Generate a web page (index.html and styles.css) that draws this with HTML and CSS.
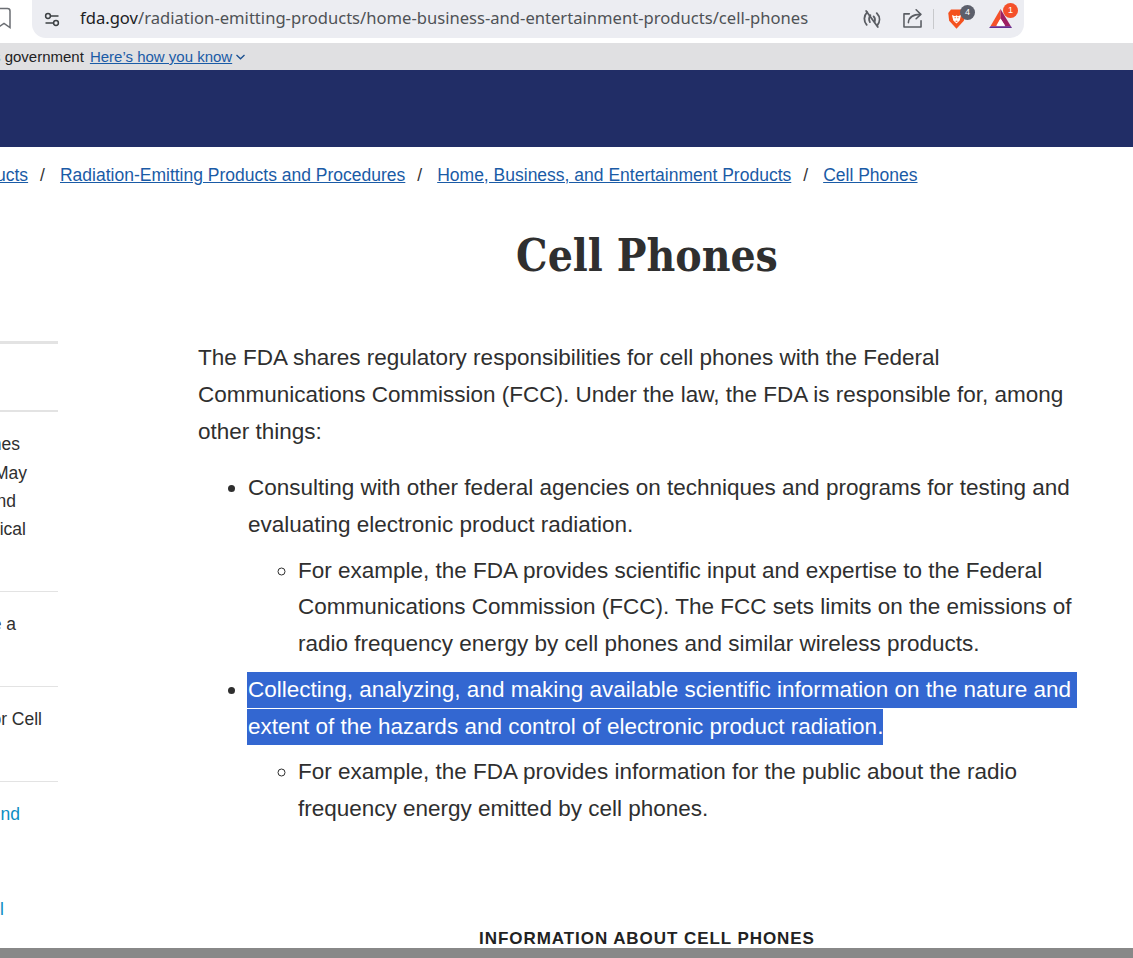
FILE: index.html
```html
<!DOCTYPE html>
<html lang="en">
<head>
    <meta charset="UTF-8">
    <meta name="viewport" content="width=device-width, initial-scale=1.0">
    <title>Cell Phones | FDA</title>
    <link rel="stylesheet" href="styles.css">
</head>
<body>
    <div class="toolbar">
        <svg class="bookmark" width="14" height="32" viewBox="0 0 14 32"><path d="M-4 8.500H7.500a2.500 2.500 0 0 1 2.500 2.500V27.500L4 23.500-2 27.500" fill="none" stroke="#6b6e73" stroke-width="1.500"/></svg>
        <div class="address-bar">
            <svg class="tune" width="18" height="18" viewBox="0 0 18 18" fill="none" stroke="#3c4043" stroke-width="1.500"><circle cx="5" cy="6" r="2.400"/><path d="M7.400 6h8.100"/><circle cx="13" cy="13" r="2.400"/><path d="M2.500 13h8.100"/></svg>
            <div class="url"><span class="host">fda.gov</span>/radiation-emitting-products/home-business-and-entertainment-products/cell-phones</div>
            <div class="bar-icons">
                <svg class="read-off" width="18" height="18" viewBox="1.500 1.500 17 17" fill="none" stroke="#5a5d63" stroke-width="1.700" stroke-linecap="round"><path d="M5.500 3.500 C2 7 2 12 5 15.500"/><path d="M8.500 6.500 C7 8.500 7 11 8 13"/><path d="M14.500 4.500 C17.800 8 17.800 12.500 15 16"/><path d="M11.500 7.500 C13 9 13 11 12.500 12.500"/><path d="M4.500 2.500 L15.500 17.500"/></svg>
                <svg class="share" width="19" height="19" viewBox="1.500 1 19.500 19.500" fill="none" stroke="#5a5d63" stroke-width="1.600" stroke-linejoin="round" stroke-linecap="round"><path d="M8 6H2.500V19.500H20V13"/><path d="M7 15C7.500 9.500 11 6.500 19.500 6.500"/><path d="M15 1.800 19.800 6.500 15 11"/></svg>
                <div class="bar-sep"></div>
                <div class="ext ext-brave">
                    <svg width="19" height="22" viewBox="0 0 20 24"><path d="M4 1.500H16L19 5.500 18 14 10 22.500 2 14 1 5.500Z" fill="#f4511e"/><path d="M5 7.500 8.500 9 10 8 11.500 9 15 7.500 13.500 13.500 10 17 6.500 13.500Z" fill="#fff"/><path d="M8 10.500h1M11 10.500h1M9 14.500h2" stroke="#f4511e" stroke-width="1.200"/></svg>
                    <span class="ext-badge badge-grey">4</span>
                </div>
                <div class="ext ext-bat">
                    <svg width="23" height="21" viewBox="0 0 24 22"><path d="M12 1 1.500 19H8L12 11Z" fill="#f4502a"/><path d="M12 1 23 19.500H17L12 11Z" fill="#9e1f63"/><path d="M1.500 19H23L24 21H0Z" fill="#662d91"/><path d="M12 11 17 18.500H7.500Z" fill="#fff"/></svg>
                    <span class="ext-badge badge-red">1</span>
                </div>
            </div>
        </div>
    </div>

    <div class="gov-banner">
        <span class="gov-text">s government</span>
        <a href="#" class="gov-link">Here’s how you know</a>
        <svg class="chevron" width="9" height="6" viewBox="0 0 9 6" fill="none" stroke="#1a4f8f" stroke-width="1.300"><path d="M.5 1 4.500 4.800 8.500 1"/></svg>
    </div>

    <div class="navy-bar"></div>

    <nav class="breadcrumb">
        <a href="#" class="crumb-first">ucts</a><span class="slash">/</span>
        <a href="#">Radiation-Emitting Products and Procedures</a><span class="slash">/</span>
        <a href="#">Home, Business, and Entertainment Products</a><span class="slash">/</span>
        <a href="#">Cell Phones</a>
    </nav>

    <div class="page">
        <aside class="sidebar">
            <div class="side-top"></div>
            <div class="side-item side-first">
                <div class="side-line line-es">nes</div>
                <div class="side-line line-may">May</div>
                <div class="side-line line-nd">nd</div>
                <div class="side-line line-ical">ical</div>
            </div>
            <div class="side-item">
                <div class="side-line line-a">e a</div>
            </div>
            <div class="side-item">
                <div class="side-line line-cell">or Cell</div>
            </div>
            <div class="side-item side-links">
                <div class="side-line line-link">nd</div>
                <div class="side-line side-last">l</div>
            </div>
        </aside>

        <main class="content">
            <h1>Cell Phones</h1>
            <p>The FDA shares regulatory responsibilities for cell phones with the Federal Communications Commission (FCC). Under the law, the FDA is responsible for, among other things:</p>
            <ul>
                <li>Consulting with other federal agencies on techniques and programs for testing and evaluating electronic product radiation.
                    <ul>
                        <li>For example, the FDA provides scientific input and expertise to the Federal Communications Commission (FCC). The FCC sets limits on the emissions of radio frequency energy by cell phones and similar wireless products.</li>
                    </ul>
                </li>
                <li>
                    <span class="sel-line sel-first">Collecting, analyzing, and making available scientific information on the nature and</span>
                    <span class="sel-line sel-last">extent of the hazards and control of electronic product radiation.</span>
                    <ul>
                        <li>For example, the FDA provides information for the public about the radio frequency energy emitted by cell phones.</li>
                    </ul>
                </li>
            </ul>
            <h2>INFORMATION ABOUT CELL PHONES</h2>
        </main>
    </div>

    <div class="bottom-bar"></div>
</body>
</html>
```

FILE: styles.css
```css
body {
    font-family: "Liberation Sans", Arial, sans-serif;
    background-color: #fff;
    color: #2f2f2f;
    margin: 0;
    padding: 0;
    height: 958px;
    overflow: hidden;
    display: flex;
    flex-direction: column;
}
a {
    color: #1a5ba6;
}

/* browser chrome */
.toolbar {
    height: 43px;
    display: flex;
    flex-shrink: 0;
    overflow: hidden;
}
.bookmark {
    margin-right: 18px;
    flex-shrink: 0;
}
.address-bar {
    width: 992px;
    height: 38px;
    background-color: #ecedf2;
    border-radius: 0 0 14px 14px;
    display: flex;
    align-items: center;
}
.tune {
    margin-left: 11px;
    margin-right: 19px;
    flex-shrink: 0;
}
.url {
    font-family: "Noto Sans", sans-serif;
    font-size: 16.600px;
    color: #4f5256;
    white-space: nowrap;
    flex-grow: 1;
    padding-bottom: 3px;
}
.host {
    color: #202124;
}
.bar-icons {
    display: flex;
    align-items: center;
    margin-right: 12px;
    padding-bottom: 1px;
}
.read-off {
    margin-right: 22px;
}
.share {
    margin-right: 11px;
}
.bar-sep {
    width: 1px;
    height: 20px;
    background-color: #c8c9cc;
    margin-right: 13px;
}
.ext {
    position: relative;
    display: flex;
}
.ext-brave {
    margin-right: 23px;
}
.ext-badge {
    position: absolute;
    width: 15px;
    height: 15px;
    border-radius: 50%;
    color: #fff;
    font-size: 9px;
    line-height: 15px;
    text-align: center;
}
.badge-grey {
    background-color: #5c5f6b;
    top: -3px;
    left: 13px;
}
.badge-red {
    background-color: #f4502a;
    top: -5px;
    left: 14px;
}

/* site header */
.gov-banner {
    height: 27px;
    background-color: #e0e0e2;
    display: flex;
    align-items: center;
    font-size: 15px;
    flex-shrink: 0;
    color: #222;
    white-space: nowrap;
}
.gov-text {
    margin-left: -7px;
    margin-right: 6px;
}
.gov-link {
    margin-right: 4px;
}
.navy-bar {
    height: 77px;
    background-color: #212d66;
    flex-shrink: 0;
}
.breadcrumb {
    height: 56px;
    display: flex;
    align-items: center;
    font-size: 17.500px;
    white-space: nowrap;
    flex-shrink: 0;
}
.crumb-first {
    margin-left: -4px;
}
.slash {
    color: #333;
    margin: 0 15px 0 12px;
}

/* page body */
.page {
    display: grid;
    grid-template-columns: 58px 1fr;
    flex-grow: 1;
    min-height: 0;
    overflow: hidden;
}
.sidebar {
    padding-top: 138px;
    font-size: 17.500px;
    overflow: hidden;
}
.side-top {
    height: 69px;
    border-top: 3px solid #e3e3e3;
    box-sizing: border-box;
}
.side-item {
    height: 95px;
    box-sizing: border-box;
    border-top: 1px solid #e3e3e3;
    padding-top: 18px;
    white-space: nowrap;
}
.side-first {
    height: 181px;
    border-top-width: 2px;
    padding-top: 18.400px;
}
.side-line {
    line-height: 28.300px;
    display: flex;
    justify-content: flex-end;
}
/* the sidebar text runs off the left of the window, so each line is end-aligned */
.line-es {
    width: 20px;
}
.line-may {
    width: 27px;
}
.line-nd {
    width: 16px;
}
.line-ical {
    width: 26px;
}
.line-a {
    width: 16px;
}
.line-cell {
    width: 42px;
}
.line-link {
    width: 20px;
}
.side-links {
    color: #0a8ec2;
}
.side-last {
    width: 4px;
    margin-top: 67px;
}
.content {
    padding: 0 37px 0 140px;
    font-size: 22.500px;
    line-height: 36.5625px;
}
h1 {
    font-family: "DejaVu Serif Condensed", "DejaVu Serif", serif;
    font-size: 44px;
    line-height: 56px;
    font-weight: bold;
    text-align: center;
    margin: 25px 0 56.400px;
}
p {
    margin: 0 0 20px;
}
ul {
    margin: 0;
    padding-left: 50px;
}
li ul {
    margin-top: 9.500px;
    margin-bottom: 9.500px;
}
.sel-line {
    display: block;
    width: fit-content;
    color: #fff;
    background-color: #3367d1;
    line-height: 36px;
    margin-bottom: 1px;
    margin-left: -1px;
    padding-left: 1px;
    white-space: nowrap;
}
.sel-first {
    padding-right: 6px;
}
.sel-last {
    margin-bottom: 1.600px;
}
h2 {
    font-size: 17px;
    line-height: 20px;
    letter-spacing: .94px;
    color: #222;
    text-align: center;
    margin: 101px 0 0;
}
.bottom-bar {
    height: 10px;
    background-color: #888;
    flex-shrink: 0;
}
```
